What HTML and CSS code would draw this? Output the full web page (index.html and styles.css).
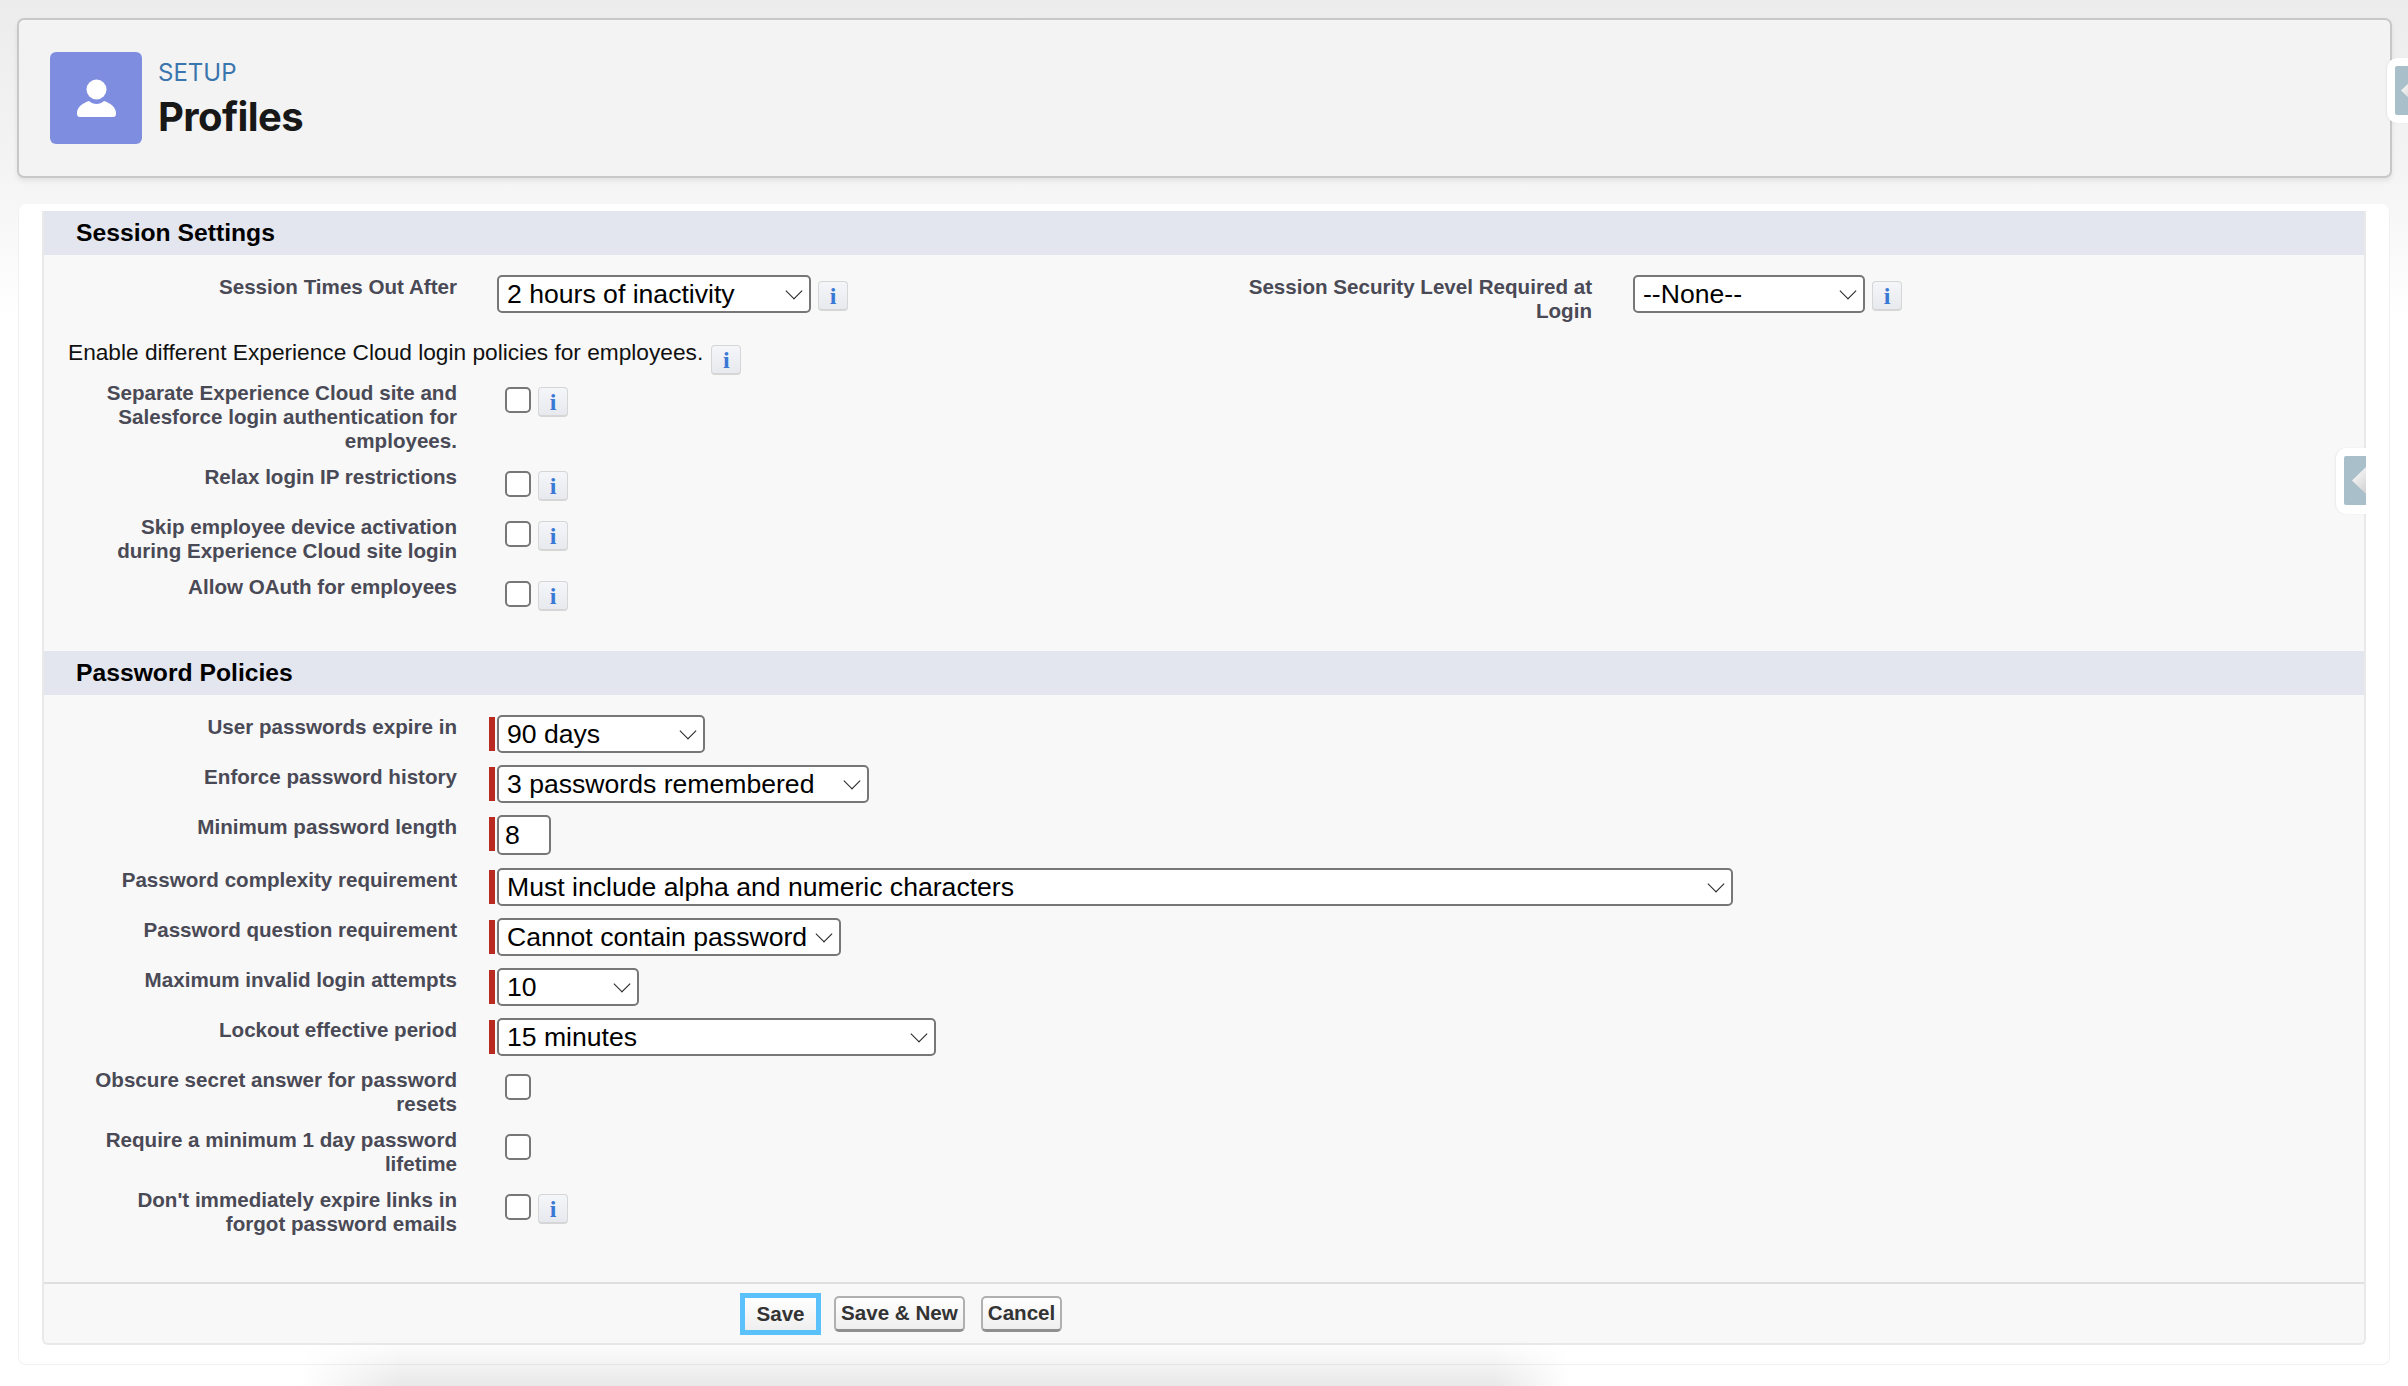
FILE: index.html
```html
<!DOCTYPE html>
<html lang="en">
<head>
    <meta charset="UTF-8">
    <title>Profiles</title>
    <link rel="stylesheet" href="styles.css">
</head>
<body>
    <div class="page-header">
        <div class="header-icon">
            <svg width="39" height="38" viewBox="0 0 39 38">
                <circle cx="19.5" cy="10.5" r="10" fill="#fff"/>
                <path d="M3 38C1 38 0 37 0 35v-1c0-6 6-10 12-12 2 2 5 3 7.500 3s5.500-1 7.500-3c6 2 12 6 12 12v1c0 2-1 3-3 3z" fill="#fff"/>
            </svg>
        </div>
        <div class="header-text">
            <div class="header-setup">SETUP</div>
            <h1 class="header-title">Profiles</h1>
        </div>
    </div>
    <div class="tab tab-top"><span class="tab-arrow"></span></div>

    <div class="card">
        <div class="block">
            <h2 class="section-bar">Session Settings</h2>
            <div class="section-body session-body">
                <div class="row first-row">
                    <label class="label">Session Times Out After</label>
                    <div class="control">
                        <span class="select w-hours"><select><option>2 hours of inactivity</option></select></span>
                        <span class="info">i</span>
                    </div>
                    <label class="label">Session Security Level Required at Login</label>
                    <div class="control control-second">
                        <span class="select w-none"><select><option>--None--</option></select></span>
                        <span class="info">i</span>
                    </div>
                </div>
                <div class="note">Enable different Experience Cloud login policies for employees. <span class="info">i</span></div>
                <div class="row check-row">
                    <label class="label">Separate Experience Cloud site and Salesforce login authentication for employees.</label>
                    <div class="control check-control"><input type="checkbox"><span class="info">i</span></div>
                </div>
                <div class="row check-row">
                    <label class="label">Relax login IP restrictions</label>
                    <div class="control check-control"><input type="checkbox"><span class="info">i</span></div>
                </div>
                <div class="row check-row">
                    <label class="label">Skip employee device activation during Experience Cloud site login</label>
                    <div class="control check-control"><input type="checkbox"><span class="info">i</span></div>
                </div>
                <div class="row check-row">
                    <label class="label">Allow OAuth for employees</label>
                    <div class="control check-control"><input type="checkbox"><span class="info">i</span></div>
                </div>
            </div>

            <h2 class="section-bar">Password Policies</h2>
            <div class="section-body password-body">
                <div class="row">
                    <label class="label">User passwords expire in</label>
                    <div class="control required">
                        <span class="select w-days"><select><option>90 days</option></select></span>
                    </div>
                </div>
                <div class="row">
                    <label class="label">Enforce password history</label>
                    <div class="control required">
                        <span class="select w-history"><select><option>3 passwords remembered</option></select></span>
                    </div>
                </div>
                <div class="row length-row">
                    <label class="label">Minimum password length</label>
                    <div class="control required">
                        <input class="text-input" type="text" value="8">
                    </div>
                </div>
                <div class="row">
                    <label class="label">Password complexity requirement</label>
                    <div class="control required">
                        <span class="select w-complex"><select><option>Must include alpha and numeric characters</option></select></span>
                    </div>
                </div>
                <div class="row">
                    <label class="label">Password question requirement</label>
                    <div class="control required">
                        <span class="select w-question"><select><option>Cannot contain password</option></select></span>
                    </div>
                </div>
                <div class="row">
                    <label class="label">Maximum invalid login attempts</label>
                    <div class="control required">
                        <span class="select w-attempts"><select><option>10</option></select></span>
                    </div>
                </div>
                <div class="row">
                    <label class="label">Lockout effective period</label>
                    <div class="control required">
                        <span class="select w-lockout"><select><option>15 minutes</option></select></span>
                    </div>
                </div>
                <div class="row check-row">
                    <label class="label">Obscure secret answer for password resets</label>
                    <div class="control check-control"><input type="checkbox"></div>
                </div>
                <div class="row check-row">
                    <label class="label">Require a minimum 1 day password lifetime</label>
                    <div class="control check-control"><input type="checkbox"></div>
                </div>
                <div class="row check-row">
                    <label class="label">Don't immediately expire links in forgot password emails</label>
                    <div class="control check-control"><input type="checkbox"><span class="info">i</span></div>
                </div>
            </div>

            <div class="buttons">
                <button class="btn btn-focus">Save</button>
                <button class="btn">Save &amp; New</button>
                <button class="btn">Cancel</button>
            </div>
        </div>
        <div class="tab tab-side"><span class="tab-arrow"></span></div>
    </div>
    <div class="bottom-shadow"></div>
</body>
</html>
```

FILE: styles.css
```css
* {
    box-sizing: border-box;
}
html, body {
    height: 100%;
}
body {
    position: relative;
    margin: 0;
    padding: 18px 17px 0;
    height: 1386px;
    overflow: hidden;
    font-family: "Liberation Sans", Arial, sans-serif;
    background: linear-gradient(#ececec 0, #f4f4f4 170px, #fff 320px);
    color: #000;
}

/* header */
.page-header {
    display: flex;
    align-items: center;
    height: 160px;
    width: 2375px;
    padding: 0 0 0 31px;
    background-color: #f3f3f3;
    border: 2px solid #c8c8c8;
    border-radius: 7px;
    box-shadow: 0 3px 5px rgba(0, 0, 0, 0.08);
}
.header-icon {
    display: flex;
    align-items: center;
    justify-content: center;
    width: 92px;
    height: 92px;
    background-color: #7f8de1;
    border-radius: 6px;
}
.header-text {
    margin-left: 16px;
    padding-top: 3px;
}
.header-setup {
    font-family: Inter, sans-serif;
    font-size: 24px;
    line-height: 28px;
    color: #3a76ad;
}
.header-title {
    margin: 7px 0 0;
    font-family: Inter, sans-serif;
    font-size: 40px;
    line-height: 46px;
    font-weight: 700;
    letter-spacing: -0.6px;
    color: #181818;
}

/* white card and inner block */
.card {
    position: relative;
    margin: 26px 0 0 1px;
    width: 2372px;
    height: 1161px;
    padding: 7px 23px 0;
    background-color: #fff;
    border: 1px solid #f1f1f1;
    border-top: none;
    border-radius: 8px;
    z-index: 1;
}
.block {
    height: 1134px;
    background-color: #f8f8f8;
    border: solid #e9e9e9;
    border-width: 0 2px 2px;
    border-radius: 0 0 6px 6px;
}
.section-bar {
    margin: 0;
    height: 44px;
    padding-left: 32px;
    font-size: 24.7px;
    line-height: 43px;
    font-weight: 700;
    background-color: #e3e6ef;
}
.session-body {
    padding-top: 20px;
    height: 396px;
}
.password-body {
    padding-top: 20px;
    height: 589px;
    border-bottom: 2px solid #dfdfdf;
}

/* rows */
.row {
    display: grid;
    grid-template-columns: 413px auto;
    margin-bottom: 12px;
}
.first-row {
    grid-template-columns: 413px 720px 415px auto;
    margin-bottom: 10px;
}
.length-row {
    margin-bottom: 13px;
}
.check-row {
    min-height: 38px;
}
.label {
    padding-left: 40px;
    font-size: 20.6px;
    line-height: 24px;
    font-weight: 700;
    text-align: right;
    color: #4a4a56;
}
.control {
    display: flex;
    align-items: flex-start;
    padding-left: 40px;
}
.control-second {
    padding-left: 41px;
}
.control.required {
    padding-left: 32px;
}
.control.required::before {
    content: "";
    flex: none;
    width: 6px;
    height: 34px;
    margin: 2px 2px 0 0;
    background-color: #b92b20;
}
.check-control {
    padding-left: 48px;
    padding-top: 6px;
}
.note {
    display: flex;
    align-items: flex-start;
    padding: 4px 0 0 24px;
    height: 48px;
    font-size: 22.7px;
    line-height: 30px;
    color: #111;
}
.note .info {
    margin: 8px 0 0 8px;
}

/* form elements */
.select {
    position: relative;
    display: inline-block;
    height: 38px;
}
.select::after {
    content: "";
    position: absolute;
    right: 11px;
    top: 10px;
    width: 11px;
    height: 11px;
    border: solid #222;
    border-width: 0 1.5px 1.5px 0;
    transform: rotate(45deg);
    pointer-events: none;
}
.select select {
    appearance: none;
    width: 100%;
    height: 100%;
    padding: 0 0 0 8px;
    font-family: "Liberation Sans", Arial, sans-serif;
    font-size: 26.6px;
    color: #000;
    background-color: #fff;
    border: 2px solid #777;
    border-radius: 5px;
}
.w-hours { width: 314px; }
.w-none { width: 232px; }
.w-days { width: 208px; }
.w-history { width: 372px; }
.w-complex { width: 1236px; }
.w-question { width: 344px; }
.w-attempts { width: 142px; }
.w-lockout { width: 439px; }
.text-input {
    width: 54px;
    height: 40px;
    padding: 0 6px;
    font-family: "Liberation Sans", Arial, sans-serif;
    font-size: 26.6px;
    background-color: #fff;
    border: 2px solid #777;
    border-radius: 5px;
}
input[type="checkbox"] {
    appearance: none;
    flex: none;
    width: 26px;
    height: 26px;
    margin: 0;
    background-color: #fff;
    border: 2px solid #777;
    border-radius: 5px;
}
.info {
    flex: none;
    display: inline-block;
    width: 30px;
    height: 30px;
    margin: 6px 0 0 7px;
    font-family: "Liberation Serif", serif;
    font-size: 24px;
    line-height: 29px;
    font-weight: 700;
    text-align: center;
    color: #3a78d6;
    background: linear-gradient(#f4f6fa, #e7e9ee);
    border: 1px solid #d6d6d6;
    border-bottom-width: 2px;
    border-radius: 4px;
}
.check-control .info {
    margin: 0 0 0 7px;
}

/* buttons */
.buttons {
    display: flex;
    align-items: center;
    gap: 13px;
    height: 59px;
    padding-left: 696px;
}
.btn {
    height: 36px;
    padding: 0 5px;
    font-family: "Liberation Sans", Arial, sans-serif;
    font-size: 20.6px;
    font-weight: 700;
    color: #333;
    background: linear-gradient(#fff, #efefef);
    border: 2px solid #b0b0b0;
    border-bottom: 3px solid #8f8f8f;
    border-radius: 5px;
}
.btn-focus {
    width: 81px;
    height: 42px;
    padding: 0;
    border: 5px solid #5bc1fa;
    border-radius: 0;
}
.btn + .btn + .btn {
    margin-left: 3px;
}

/* collapse tabs on the right */
.tab {
    position: absolute;
    padding: 8px 0 8px 8px;
    background-color: #fff;
    border-radius: 10px 0 0 10px;
    box-shadow: -1px 0 2px rgba(0, 0, 0, 0.06);
}
.tab-top {
    top: 58px;
    right: 0;
    width: 21px;
    height: 65px;
}
.tab-side {
    top: 244px;
    right: 23px;
    width: 30px;
    height: 66px;
    z-index: 1;
}
.tab-arrow {
    display: block;
    position: relative;
    height: 49px;
    background-color: #a9bfc9;
    border-radius: 2px 0 0 2px;
    overflow: hidden;
}
.tab-arrow::before {
    content: "";
    position: absolute;
    top: 11px;
    left: 8px;
    width: 14px;
    height: 27px;
    clip-path: polygon(100% 0, 100% 100%, 0 50%);
    background: linear-gradient(135deg, #fff, #d0d0d0);
}
.tab-top .tab-arrow::before {
    left: 6px;
}

/* soft shadow under the page */
.bottom-shadow {
    position: absolute;
    left: 300px;
    bottom: 0;
    width: 1270px;
    height: 46px;
    z-index: 2;
    background: linear-gradient(rgba(0, 0, 0, 0), rgba(0, 0, 0, 0.09));
    -webkit-mask-image: linear-gradient(90deg, transparent, #000 8%, #000 94%, transparent);
    mask-image: linear-gradient(90deg, transparent, #000 8%, #000 94%, transparent);
    pointer-events: none;
}
```
